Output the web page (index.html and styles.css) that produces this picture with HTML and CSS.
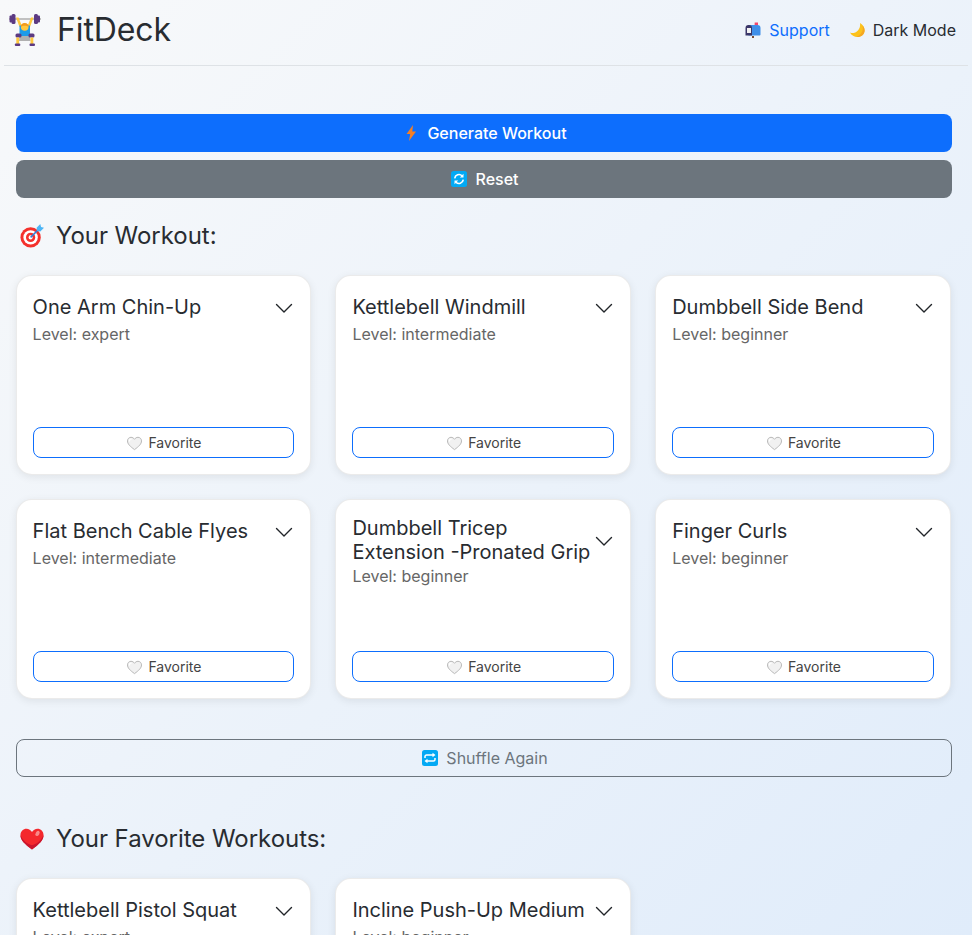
FILE: index.html
```html
<!DOCTYPE html>
<html lang="en">
<head>
<meta charset="utf-8">
<title>FitDeck</title>
<link rel="stylesheet" href="styles.css">
</head>
<body>
<svg class="defs" aria-hidden="true">
  <defs>
    <symbol id="chev" viewBox="0 0 18 18"><path d="M1.5 5.5 9 13 16.5 5.5" fill="none" stroke="#212529" stroke-width="1.4" stroke-linecap="round" stroke-linejoin="round"/></symbol>
    <symbol id="heart" viewBox="0 0 16 16"><path d="M8 14.6C3.6 11.4 1 9 1 5.9 1 3.8 2.6 2.3 4.5 2.3c1.4 0 2.7.7 3.500 2 .8-1.300 2.100-2 3.500-2C13.400 2.300 15 3.800 15 5.900 15 9 12.400 11.400 8 14.600Z" fill="#f1f1f1" stroke="#b9b9b9" stroke-width="1"/><path d="M3 6c0-1.300.8-2 1.800-2" fill="none" stroke="#fff" stroke-width="1.200" stroke-linecap="round"/></symbol>
  </defs>
</svg>
<div class="page">
  <nav class="nav">
    <a class="brand">
      <svg class="brand-ico" viewBox="0 0 32 32" aria-hidden="true">
        <rect x="0" y="4.200" width="32" height="1.600" fill="#b4b4b4"/>
        <rect x="2.500" y="0" width="4" height="10" rx="1.500" fill="#5c3a82"/>
        <rect x="0.500" y="1.500" width="2.500" height="7" rx="1" fill="#5c3a82"/>
        <rect x="25" y="0" width="4" height="10" rx="1.500" fill="#5c3a82"/>
        <rect x="28.500" y="1.500" width="2.500" height="7" rx="1" fill="#5c3a82"/>
        <path d="M7 3.500h2.500L13 12l-2.500 1Z M24.500 3.500H22L18.500 12l2.500 1Z" fill="#ffc83d"/>
        <path d="M10.500 11.500h2.800q3 3.500 5 0h2.700V22h-10.500Z" fill="#1e9be9"/>
        <circle cx="15.700" cy="13" r="3.800" fill="#ffc83d"/>
        <path d="M11.800 13c0-3 1.800-4 3.900-4s3.900 1 3.900 4c-1.200-1.600-6.600-1.600-7.800 0Z" fill="#f29b1d"/>
        <path d="M10.500 22h10.500l.5 5h-11.500Z" fill="#b0b0b0"/>
        <rect x="6.500" y="19.500" width="6" height="4" rx="1.500" fill="#5c3a82"/>
        <rect x="19.500" y="19.500" width="6" height="4" rx="1.500" fill="#5c3a82"/>
        <rect x="7.300" y="23.500" width="2.800" height="7" fill="#ffc83d"/>
        <rect x="21.500" y="23.500" width="2.800" height="7" fill="#ffc83d"/>
        <rect x="5.800" y="29.500" width="5.500" height="2.500" rx="1" fill="#5c3a82"/>
        <rect x="20.500" y="29.500" width="5.500" height="2.500" rx="1" fill="#5c3a82"/>
      </svg>
      <span>FitDeck</span>
    </a>
    <div class="nav-links">
      <a class="nav-link support">
        <svg class="nav-ico" viewBox="0 0 16 16" aria-hidden="true">
          <rect x="7" y="14" width="2" height="2" fill="#7a4a32"/>
          <rect x="9.700" y="1" width="1.200" height="5" fill="#d8d8d8"/>
          <rect x="9.700" y="0.500" width="3.300" height="2.500" fill="#f2476b"/>
          <path d="M3.500 3H12.500a3 3 0 0 1 3 3V12.500a1 1 0 0 1-1 1H3.500Z" fill="#3f8fe8"/>
          <path d="M3.500 3A3 3 0 0 0 .5 6V13.500H7V6a3 3 0 0 0-3-3Z" fill="#3a3668"/>
          <rect x="2" y="6" width="4" height="5" fill="#f2f2f2"/>
        </svg>
        Support
      </a>
      <a class="nav-link">
        <svg class="nav-ico" viewBox="0 0 16 16" aria-hidden="true">
          <path d="M11 1C14 2.600 15.600 5.400 15.600 8.400c0 3.800-3.200 6.600-7 6.600-3.200 0-6.200-1.700-7.600-4.500 1.300.6 3 .7 4.500.3C9.500 9.600 11.700 5.300 11 1Z" fill="#fcc21b"/>
          <path d="M13.500 3.500C15 8.500 12 13.500 7 14.900c4.500.6 8.600-2.500 8.600-6.500 0-1.900-.8-3.600-2.100-4.900Z" fill="#f5a623"/>
        </svg>
        Dark Mode
      </a>
    </div>
  </nav>

  <main class="main">
    <button class="btn btn-primary" type="button">
      <svg class="btn-ico" viewBox="0 0 16 16" aria-hidden="true"><path d="M10 0 3.500 9H7.200L6 16 13 6.500H9.300Z" fill="#f47f24"/></svg>
      Generate Workout
    </button>
    <button class="btn btn-secondary" type="button">
      <svg class="btn-ico" viewBox="0 0 16 16" aria-hidden="true">
        <rect width="16" height="16" rx="2.500" fill="#03a9f4"/>
        <path d="M3.700 7.300A4.300 4.300 0 0 1 11 4.800M12.300 8.700A4.300 4.300 0 0 1 5 11.200" fill="none" stroke="#fff" stroke-width="1.600"/>
        <path d="M12.500 2.800V6.500H8.800Z M3.500 13.200V9.500H7.200Z" fill="#fff"/>
      </svg>
      Reset
    </button>

    <h2 class="section-title section-workout">
      <svg class="title-ico" viewBox="0 0 26 26" aria-hidden="true">
        <circle cx="11.500" cy="14.500" r="11" fill="#f4312c"/>
        <circle cx="11.500" cy="14.500" r="7.800" fill="#fff"/>
        <circle cx="11.500" cy="14.500" r="5" fill="#f4312c"/>
        <circle cx="11.500" cy="14.500" r="2.200" fill="#fff"/>
        <path d="M11.500 14.500 20 6" stroke="#2f7fd8" stroke-width="1.600"/>
        <path d="M18 4 22 0l.8 3.200L26 4l-4 4-3.500-.5Z" fill="#4db5f5"/>
      </svg>
      Your Workout:
    </h2>

    <section class="grid">
      <article class="card"><div><header class="card-head"><h5 class="card-title">One Arm Chin-Up</h5><svg class="chev"><use href="#chev"/></svg></header><p class="level">Level: expert</p></div><button class="fav" type="button"><svg class="heart"><use href="#heart"/></svg>Favorite</button></article>
      <article class="card"><div><header class="card-head"><h5 class="card-title">Kettlebell Windmill</h5><svg class="chev"><use href="#chev"/></svg></header><p class="level">Level: intermediate</p></div><button class="fav" type="button"><svg class="heart"><use href="#heart"/></svg>Favorite</button></article>
      <article class="card"><div><header class="card-head"><h5 class="card-title">Dumbbell Side Bend</h5><svg class="chev"><use href="#chev"/></svg></header><p class="level">Level: beginner</p></div><button class="fav" type="button"><svg class="heart"><use href="#heart"/></svg>Favorite</button></article>
      <article class="card"><div><header class="card-head"><h5 class="card-title">Flat Bench Cable Flyes</h5><svg class="chev"><use href="#chev"/></svg></header><p class="level">Level: intermediate</p></div><button class="fav" type="button"><svg class="heart"><use href="#heart"/></svg>Favorite</button></article>
      <article class="card"><div><header class="card-head"><h5 class="card-title">Dumbbell Tricep Extension -Pronated Grip</h5><svg class="chev"><use href="#chev"/></svg></header><p class="level">Level: beginner</p></div><button class="fav" type="button"><svg class="heart"><use href="#heart"/></svg>Favorite</button></article>
      <article class="card"><div><header class="card-head"><h5 class="card-title">Finger Curls</h5><svg class="chev"><use href="#chev"/></svg></header><p class="level">Level: beginner</p></div><button class="fav" type="button"><svg class="heart"><use href="#heart"/></svg>Favorite</button></article>
    </section>

    <button class="btn btn-outline" type="button">
      <svg class="btn-ico" viewBox="0 0 16 16" aria-hidden="true">
        <rect width="16" height="16" rx="2.500" fill="#03a9f4"/>
        <path d="M3 8V6.500A1.500 1.500 0 0 1 4.500 5H11M13 8V9.500A1.500 1.500 0 0 1 11.500 11H5" fill="none" stroke="#fff" stroke-width="1.500"/>
        <path d="M10.500 2.800 13.500 5 10.500 7.200Z M5.500 8.800 2.500 11 5.500 13.200Z" fill="#fff"/>
      </svg>
      Shuffle Again
    </button>

    <h2 class="section-title section-fav">
      <svg class="title-ico" viewBox="0 0 26 24" aria-hidden="true">
        <path d="M13 23.500C5 17.500.5 13.500.5 7.800.5 3.500 3.600.8 7 .8c2.500 0 4.800 1.300 6 3.700C14.200 2.100 16.500.8 19 .8c3.400 0 6.500 2.700 6.500 7 0 5.700-4.500 9.700-12.500 15.700Z" fill="#f4282d"/>
        <path d="M13 23.500C5 17.500.5 13.500.5 7.800c3 7 8 10 12.500 11 4.500-1 9.500-4 12.500-11 0 5.700-4.500 9.700-12.500 15.700Z" fill="#c9152d"/>
        <ellipse cx="19" cy="6" rx="2" ry="3" transform="rotate(30 19 6)" fill="#f88a8a"/>
      </svg>
      Your Favorite Workouts:
    </h2>

    <section class="grid">
      <article class="card"><div><header class="card-head"><h5 class="card-title">Kettlebell Pistol Squat</h5><svg class="chev"><use href="#chev"/></svg></header><p class="level">Level: expert</p></div><button class="fav" type="button"><svg class="heart"><use href="#heart"/></svg>Favorite</button></article>
      <article class="card"><div><header class="card-head"><h5 class="card-title">Incline Push-Up Medium</h5><svg class="chev"><use href="#chev"/></svg></header><p class="level">Level: beginner</p></div><button class="fav" type="button"><svg class="heart"><use href="#heart"/></svg>Favorite</button></article>
    </section>
  </main>
</div>
</body>
</html>
```

FILE: styles.css
```css
* { box-sizing: border-box; }
html, body { height: 100%; overflow: hidden; }
body {
  margin: 0;
  font-family: Inter, "Liberation Sans", sans-serif;
  font-size: 16px;
  line-height: 1.5;
  color: #282c31;
  background: linear-gradient(135deg, #f8f9fa 0%, #e0ecfa 100%);
}
.defs { display: none; }
.page { padding: 0 4px; }
.nav {
  height: 66px;
  display: flex;
  align-items: center;
  justify-content: space-between;
  padding: 0 12px 6px 5px;
  border-bottom: 1px solid #dee2e6;
}
.brand { display: flex; align-items: center; gap: 16px; font-size: 32px; line-height: 48px; letter-spacing: -0.12px; }
.brand-ico { width: 32px; height: 32px; }
.nav-links { display: flex; gap: 19px; }
.nav-link { display: flex; align-items: center; gap: 8px; font-size: 16px; }
.nav-ico { width: 16px; height: 16px; }
.support { color: #0d6efd; }
.main { padding: 48px 16px 0 12px; }
.btn {
  display: flex;
  align-items: center;
  justify-content: center;
  gap: 6px;
  width: 100%;
  height: 38px;
  margin: 0;
  padding: 0 12px;
  border: 1px solid transparent;
  border-radius: 8px;
  font: 500 16px/24px Inter, "Liberation Sans", sans-serif;
}
.btn-primary { background: #0d6efd; color: #fff; }
.btn-secondary { background: #6c757d; color: #fff; margin-top: 8px; }
.btn-outline { background: transparent; border-color: #6c757d; color: #6c757d; font-weight: 400; margin-top: 40px; }
.btn-ico { width: 20px; height: 16px; }
.section-title {
  display: flex;
  align-items: center;
  gap: 12px;
  margin: 0;
  padding-left: 4px;
  font-size: 24px;
  font-weight: 400;
  line-height: 29px;
  letter-spacing: -0.04px;
}
.section-workout { margin-top: 23px; margin-bottom: 25px; }
.section-fav { margin-top: 47px; margin-bottom: 25px; }
.title-ico { width: 24px; height: 24px; }
.grid { display: grid; grid-template-columns: repeat(3, 295.6px); gap: 24px 24.2px; margin-left: -0.4px; }
.card {
  height: 200px;
  display: flex;
  flex-direction: column;
  justify-content: space-between;
  padding: 16px;
  background: #fff;
  border: 1px solid rgba(0, 0, 0, 0.08);
  border-radius: 16px;
  box-shadow: 0 2px 8px rgba(0, 0, 0, 0.08);
}
.card-head { display: flex; justify-content: space-between; align-items: center; gap: 4px; min-height: 30px; }
.card-title { margin: 0; font-size: 20px; font-weight: 400; line-height: 24px; }
.level { margin: 0; font-size: 16px; line-height: 24px; color: #666; }
.chev { flex: none; width: 18px; height: 18px; margin-top: 2px; margin-right: 1px; }
.fav {
  display: flex;
  align-items: center;
  justify-content: center;
  gap: 4px;
  height: 31px;
  width: 100%;
  background: #fff;
  border: 1px solid #0d6efd;
  border-radius: 8px;
  font: 400 14px/21px Inter, "Liberation Sans", sans-serif;
  color: #444;
}
.heart { width: 19px; height: 16px; }
```
